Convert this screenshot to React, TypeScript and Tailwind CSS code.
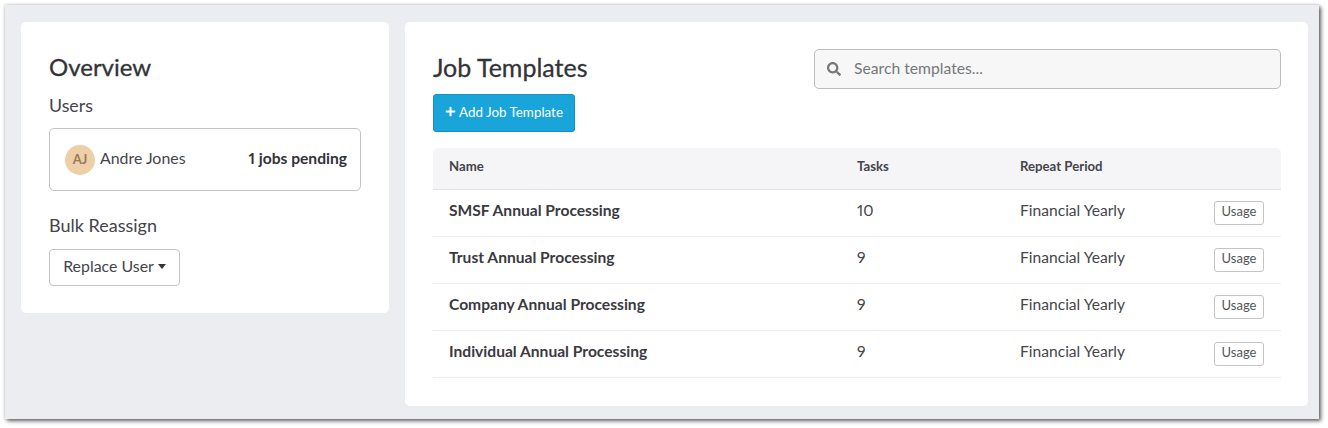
import { FaSearch, FaPlus } from "react-icons/fa";

const templates = [
  { name: "SMSF Annual Processing", tasks: 10, period: "Financial Yearly" },
  { name: "Trust Annual Processing", tasks: 9, period: "Financial Yearly" },
  { name: "Company Annual Processing", tasks: 9, period: "Financial Yearly" },
  { name: "Individual Annual Processing", tasks: 9, period: "Financial Yearly" },
];

export default function App() {
  return (
    <div
      className="w-[1328px] h-[428px] bg-white pl-[5px] pt-[5px] overflow-hidden text-[#333338]"
      style={{ fontFamily: "Lato, 'Open Sans', sans-serif" }}
    >
      <div className="w-[1314px] h-[414px] bg-[#ecedf1] shadow-[2px_2px_4px_rgba(0,0,0,0.6),0_0_3px_rgba(0,0,0,0.2)] flex items-start gap-4 pl-4 pt-[17px]">
        {/* Overview */}
        <div className="w-[368px] h-[291px] shrink-0 bg-white rounded-[5px] pl-7 pr-7 pt-[28px]">
          <h2 className="text-[24px] leading-[34px] [-webkit-text-stroke:0.3px_#333338]">Overview</h2>
          <h3 className="mt-[9px] text-[17.8px] leading-[24px] text-[#444449]">Users</h3>
          <div className="mt-[11px] h-[63px] w-[312px] border border-[#c4c4c8] rounded-[5px] flex items-center justify-between pl-[15px] pr-[13px]">
            <div className="flex items-center gap-[5px]">
              <div className="w-[30px] h-[30px] rounded-full bg-[#eecfa7] flex items-center justify-center text-[13px] font-bold text-[#96795a]">
                AJ
              </div>
              <span className="text-[15.9px] text-[#45454a] relative -top-[2px]">Andre Jones</span>
            </div>
            <span className="text-[15.6px] font-bold proportional-nums pb-[2px]">1 jobs pending</span>
          </div>
          <h3 className="mt-[22px] text-[18px] leading-[24px] text-[#444449]">Bulk Reassign</h3>
          <button className="mt-[12px] h-[37px] w-[131px] border border-[#c4c4c8] rounded-[4px] flex items-center justify-center gap-1 pb-[4px] text-[15.9px] text-[#45454a]">
            Replace User
            <span className="w-0 h-0 mt-[2px] border-x-[4.5px] border-x-transparent border-t-[5px] border-t-[#333338]" />
          </button>
        </div>

        {/* Job templates */}
        <div className="w-[903px] h-[384px] shrink-0 bg-white rounded-[5px] pl-7 pr-[27px] pt-[27px]">
          <div className="flex items-start justify-between">
            <h1 className="mt-[1px] text-[25px] leading-[34px] [-webkit-text-stroke:0.3px_#333338]">Job Templates</h1>
            <div className="w-[467px] h-10 bg-[#f7f7f7] border border-[#bdbdc0] rounded-[5px] flex items-center pl-3 gap-[13px]">
              <FaSearch className="w-[14px] h-[14px] text-[#77777b]" />
              <span className="text-[15.7px] text-[#77777b]">Search templates...</span>
            </div>
          </div>
          <button className="mt-[5px] block h-[38px] w-[142px] pb-[2px] bg-[#19a5d9] border border-[#1590c8] rounded-[3px] text-white text-[13.4px]">
            <span className="flex items-center justify-center gap-[3px]">
              <FaPlus className="w-[11px] h-[11px]" />
              Add Job Template
            </span>
          </button>

          <table className="mt-[16px] w-[848px] table-fixed border-collapse">
            <thead>
              <tr className="h-[41px] bg-[#f5f5f7] border-b border-[#e4e4e8] text-left text-[13.2px] text-[#44444a]">
                <th className="w-[424px] pl-4 pb-[2px] font-bold rounded-tl-[5px]">Name</th>
                <th className="w-[163px] pb-[2px] font-bold">Tasks</th>
                <th className="pb-[2px] font-bold">Repeat Period</th>
                <th className="w-[67px] rounded-tr-[5px]" />
              </tr>
            </thead>
            <tbody>
              {templates.map((t) => (
                <tr key={t.name} className="h-[47px] border-b border-[#ececef] text-[15.6px]">
                  <td className="pl-4 pb-[4px] font-bold text-[#3a3a3f]">{t.name}</td>
                  <td className="pb-[4px] text-[#45454a] proportional-nums">{t.tasks}</td>
                  <td className="pb-[4px] text-[#45454a]">{t.period}</td>
                  <td>
                    <button className="block w-[50px] h-6 pb-[2px] border border-[#c4c4c8] rounded-[3px] text-[13px] text-[#55555a]">
                      Usage
                    </button>
                  </td>
                </tr>
              ))}
            </tbody>
          </table>
        </div>
      </div>
    </div>
  );
}
